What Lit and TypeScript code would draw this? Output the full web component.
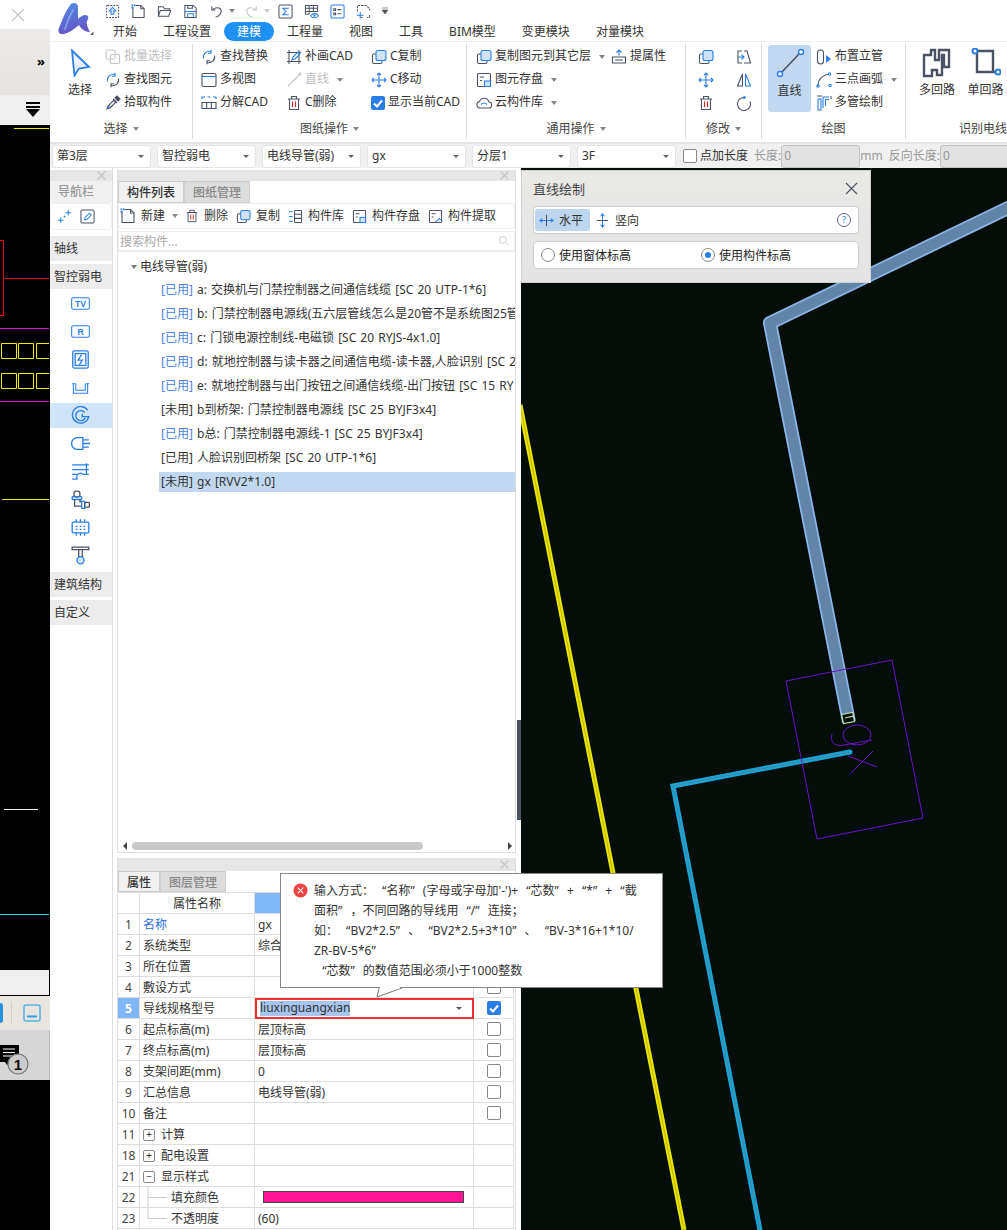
import { LitElement, html, css, svg } from "lit";
import { customElement } from "lit/decorators.js";

const ic = (size: number, content: unknown, vb = "0 0 16 16", h?: number) =>
  html`<svg class="ic" width=${size} height=${h ?? size} viewBox=${vb}>${content}</svg>`;

const closeX = html`<svg class="ic" width="9" height="9" viewBox="0 0 9 9"><path class="sg" stroke-width="1.200" d="M.5.5l8 8M8.500.5l-8 8"/></svg>`;

const P = {
  upload: svg`<rect x="1.500" y="1.500" width="13" height="13" rx="1" stroke-dasharray="2 1.200"/><path class="sb fb" d="M8 3.500l3.500 4H9.500V11h-3V7.500H4.500z"/>`,
  newdoc: svg`<path d="M2 3v11.500h12V5l-3.500-3.500H5"/><path d="M10.500 1.500V5H14"/><g class="fbb"><rect x="0.500" y="0.500" width="1.800" height="1.800"/><rect x="3" y="0.500" width="1.800" height="1.800"/><rect x="0.500" y="3" width="1.800" height="1.800"/></g>`,
  folder: svg`<path d="M1.500 13V3h5l1.500 2h5.500v2"/><path d="M1.500 13l2-6h11l-2 6z"/>`,
  save: svg`<path d="M2 1.500h9l3 3v10H2z"/><path class="sb" d="M2 8h12"/><path class="sb" d="M5 14.500V10.500h6v4"/><path d="M5 1.500v3h5v-3"/>`,
  undo: svg`<path d="M3 2.500v4h4"/><path d="M3.500 6.500C5 3.500 12 2.500 13 7c.6 3-2.500 6-6 7"/>`,
  redo: svg`<path class="sg" d="M13 2.500v4H9"/><path class="sg" d="M12.500 6.500C11 3.500 4 2.500 3 7c-.6 3 2.500 6 6 7"/>`,
  sigma: svg`<rect x="1" y="1" width="14" height="14" rx="1.500"/><path class="sb" d="M11.500 4.500H5l3.500 3.500L5 11.500h6.500"/>`,
  gridEye: svg`<path d="M1.500 11V1.500h13V8M1.500 4.500h13M1.500 8h13M5.500 1.500V11M10 1.500V8M1.500 11h4"/><path class="sb" d="M7 12.500c2-3 6-3 8.500 0-2.500 3-6.500 3-8.500 0z"/><circle class="fbb" cx="11" cy="12.500" r="1.200"/>`,
  listBox: svg`<rect x="1" y="1" width="14" height="14" rx="1.500" class="sb"/><path d="M4 5h2v2H4zM4 9.500h2v2H4zM8 6h4M8 10.500h4"/>`,
  dashAdd: svg`<path d="M1.500 8V1.500h9L14.500 5v2M14.500 12v2.500H12M7 14.500H5" stroke-dasharray="2.500 1"/><path class="sb" d="M1 12h7M4.500 8.500v7"/>`,
  batch: svg`<g class="sg"><rect x="1" y="1" width="9" height="9" rx="1.500"/><rect x="5.500" y="5.500" width="9" height="9" rx="1.500"/></g>`,
  find: svg`<path class="sb" d="M2.500 9.500A6 6 0 0 1 10 2.500M10 .8v3.400H6.800"/><path d="M13.500 6.500A6 6 0 0 1 6 13.500M6 15.200v-3.400h3.200"/>`,
  pick: svg`<path d="M2 14l1-3 6-6 2 2-6 6z"/><path d="M8 4l4 4" /><path class="fd" d="M10 3l2-2 3 3-2 2z"/><path class="sb" d="M2.500 13.500l2.500-2.500"/>`,
  multi: svg`<rect x="1" y="1.500" width="14" height="13" rx="1.500"/><path class="sb" d="M1 4.500h14"/>`,
  split: svg`<path class="sb" d="M1 4V2h3M12 2h3v2M6.500 2h3"/><path d="M1 7.500h14v6H1zM5.700 7.500v6M10.300 7.500v6"/>`,
  patch: svg`<path d="M3 1v14M1 3.500h14M1 12.500h14M13 1v14"/><path class="sb" d="M6 11l1-3 5-5 2 2-5 5z"/>`,
  lineG: svg`<path class="sg" d="M2 14L14 2"/><circle class="sg" cx="14" cy="2" r="1"/>`,
  trash: svg`<path d="M2 4h12M5.500 4V1.500h5V4M3.500 4v10.500h9V4"/><path class="sr" d="M6.500 6.500v5.500M9.500 6.500v5.500"/>`,
  copy: svg`<rect x="1.500" y="5" width="9.500" height="9.500" rx="1.500"/><rect class="sb fb" x="5" y="1.500" width="10" height="10" rx="2"/>`,
  move: svg`<path class="sb" d="M8 1v14M1 8h14M6 3l2-2 2 2M6 13l2 2 2-2M3 6L1 8l2 2M13 6l2 2-2 2"/>`,
  check: svg`<rect x="0" y="0" width="14" height="14" rx="2" class="cbf"/><path class="ckm" d="M3 7.500l3 3 5-6"/>`,
  disk: svg`<rect x="1.500" y="1.500" width="13" height="13" rx="1"/><path d="M4 5h4M4 8.500h2"/><rect class="sb fb" x="8.500" y="9" width="6" height="5.500"/>`,
  cloud: svg`<path d="M4 13h8.500a3 3 0 0 0 .5-6A5 5 0 0 0 3.500 6.500 3.300 3.300 0 0 0 4 13z"/><path class="sb" d="M5 9.500c2-2 4-2 6 0"/>`,
  attr: svg`<path d="M1.500 8h13v6h-13zM4 11h8"/><path class="sb" d="M8 6.500V1M5.500 3.500L8 1l2.500 2.500"/>`,
  modA: svg`<path d="M6 2H2v12h4"/><path d="M8 2h3l3.500 12H8"/><path class="sb" d="M2 8h6M5.500 5.500L8 8l-2.500 2.500"/>`,
  mirror: svg`<path d="M6.500 2L1.500 14h5z"/><path class="sb" d="M9.500 2l5 12h-5z"/>`,
  rotate: svg`<path d="M8 2.500A6.500 6.500 0 1 0 14 6.500"/><path class="fbb sb" d="M7.500 0.500l3 2-3 2z"/>`,
  riser: svg`<rect x="1.500" y="1" width="6" height="14" rx="3"/><path class="fbb" d="M10 6l5 4-5 4z"/>`,
  arc: svg`<path d="M2 14C2 7 7 3 13 2"/><circle class="sb" cx="2" cy="14" r="1.200"/><circle class="sb" cx="13.500" cy="2" r="1.200"/><circle class="sb" cx="14" cy="13.500" r="1.200"/>`,
  multiPipe: svg`<path d="M1 1h5M15 1v3"/><path class="sb" d="M2 15V4h3v11zM7 13V2h6"/><path class="sb" d="M9.500 11V4.500H13"/>`,
  pm: svg`<path class="sb" d="M9 4h6M12 1v6M1 12h6M4 9v6"/><circle class="fbb" cx="8" cy="8" r="1"/>`,
  edit: svg`<rect x="1" y="1" width="14" height="14" rx="1.500"/><path class="sb" d="M5 11.500l.5-2.500 4.500-4.500 2 2L7.500 11z"/>`,
  lib: svg`<rect x="7" y="1.500" width="7.500" height="13" rx="1"/><path d="M7 5.500h7.500M7 10h7.500"/><path class="sb" d="M1 3h4M1 8h4M1 13h4"/>`,
  extract: svg`<rect x="1.500" y="1.500" width="13" height="13" rx="1"/><path d="M4 5h4M4 8.500h2"/><path class="sb" d="M8 14l4-4 2 2"/>`,
  tv: svg`<rect class="sb" x="0.700" y="2" width="18.600" height="12" rx="1.500"/>`,
  tray: svg`<path class="sb" d="M2.500 4v10h15V4M5 4v7h10V4M1 4h4M15 4h4"/>`,
  card: svg`<rect class="sb" x="1.500" y="0.800" width="13" height="14.400" rx="1.200"/><rect class="sb" x="3.500" y="3" width="9" height="10"/><path class="sb" d="M9 3.800L6 8.500h3.500L7 12.500"/>`,
  swirl: svg`<path class="sb" d="M14 3.500A7 7 0 1 0 15 9H9.500V6.500"/><path class="sb" d="M11.500 5.500A4.200 4.200 0 1 0 12 10"/>`,
  plug: svg`<path class="sb" d="M10 3H5.500a5 5 0 0 0 0 10H10zM10 5h5M10 8h6M10 11h5"/>`,
  ladder: svg`<path class="sb" d="M1 2.500h14M1 6.500h14M13 1v9M1 10.500h5c1-1.500 3-1.500 4 0h5M1 14.500h4v-4"/>`,
  elbow: svg`<rect x="2.500" y="1" width="5" height="5" rx="2"/><rect class="sb" x="1" y="5.500" width="8" height="2.500" rx=".5"/><path d="M3 8v5.500h6"/><path d="M7.500 8v2h2"/><rect class="sb" x="9" y="9.500" width="2.500" height="6"/><rect x="11.500" y="10.500" width="4" height="4" rx="1"/>`,
  chip: svg`<rect class="sb" x="1" y="3.500" width="14" height="9" rx="1"/><path class="sb" d="M4.500 1v2.500M8 1v2.500M11.500 1v2.500M4.500 12.500V15M8 12.500V15M11.500 12.500V15M4 7h1.500M7.300 7h1.500M10.500 7H12M4 9.500h1.500M7.300 9.500h1.500M10.500 9.500H12"/>`,
  tee: svg`<path d="M1 1h14v2H1zM6.500 3h3v6h-3z"/><circle class="sb fb" cx="8" cy="12" r="3"/>`,
  hArrows: svg`<path class="sb" d="M1 8h14M3.500 6L1 8l2.500 2M12.500 6L15 8l-2.500 2"/><path d="M8 2v12"/>`,
  vArrows: svg`<path class="sb" d="M8 1v14M6 3.500L8 1l2 2.500M6 12.500L8 15l2-2.500"/><path d="M2 8h12"/>`,
  mag: svg`<g class="sg"><circle cx="6.500" cy="6.500" r="4.500"/><path d="M10 10l4 4"/></g>`,
  err: svg`<circle class="errc" cx="8" cy="8" r="7.500"/><path class="errx" d="M5 5l6 6M11 5l-6 6"/>`,
};

const caret = html`<span class="caret"></span>`;
const small = (icon: unknown, label: string, drop = false, dim = false) =>
  html`<div class="small ${dim ? "dim" : ""}">${ic(16, icon)}<span>${label}</span>${drop ? caret : ""}</div>`;

const group = (cls: string, label: string, body: unknown, drop = true) => html`
  <section class="group ${cls}">
    <div class="gbody">${body}</div>
    <div class="glabel"><span>${label}</span>${drop ? caret : ""}</div>
  </section>`;

const tree = [
  ["已用", "a: 交换机与门禁控制器之间通信线缆 [SC 20 UTP-1*6]", 1],
  ["已用", "b: 门禁控制器电源线(五六层管线怎么是20管不是系统图25管", 1],
  ["已用", "c: 门锁电源控制线-电磁锁 [SC 20 RYJS-4x1.0]", 1],
  ["已用", "d: 就地控制器与读卡器之间通信电缆-读卡器,人脸识别 [SC 2", 1],
  ["已用", "e: 就地控制器与出门按钮之间通信线缆-出门按钮 [SC 15 RY", 1],
  ["未用", "b到桥架: 门禁控制器电源线 [SC 25 BYJF3x4]", 0],
  ["已用", "b总: 门禁控制器电源线-1 [SC 25 BYJF3x4]", 1],
  ["已用", "人脸识别回桥架 [SC 20 UTP-1*6]", 0],
  ["未用", "gx [RVV2*1.0]", 0],
] as const;

type Row = { n: string; name: string; val?: string; cb?: boolean; on?: boolean; blue?: boolean; exp?: string; sub?: number };
const rows: Row[] = [
  { n: "1", name: "名称", val: "gx", blue: true },
  { n: "2", name: "系统类型", val: "综合" },
  { n: "3", name: "所在位置" },
  { n: "4", name: "敷设方式", cb: true },
  { n: "5", name: "导线规格型号" },
  { n: "6", name: "起点标高(m)", val: "层顶标高", cb: true },
  { n: "7", name: "终点标高(m)", val: "层顶标高", cb: true },
  { n: "8", name: "支架间距(mm)", val: "0", cb: true },
  { n: "9", name: "汇总信息", val: "电线导管(弱)", cb: true },
  { n: "10", name: "备注", cb: true },
  { n: "11", name: "计算", exp: "+" },
  { n: "18", name: "配电设置", exp: "+" },
  { n: "21", name: "显示样式", exp: "−" },
  { n: "22", name: "填充颜色", sub: 1 },
  { n: "23", name: "不透明度", val: "(60)", sub: 2 },
];

@customElement("app-root")
export class AppRoot extends LitElement {
  static styles = css`
    :host { width: 1007px; height: 1230px; position: relative; overflow: hidden; background: #fff; color: #333;
      font: 12px/1.2 "Noto Sans", "Noto Sans CJK SC", sans-serif; display: flex; }
    * { box-sizing: border-box; }
    .ic { flex: none; fill: none; stroke: #4b5263; stroke-width: 1.1; display: block; }
    .sb { stroke: #2a7fe6; } .sg { stroke: #c4c4c4; } .sr { stroke: #e02020; }
    .fb { fill: #cfe2f8; } .fbb { fill: #2a7fe6; stroke: none; } .fd { fill: #4b5263; }
    .cbf { fill: #2a7fe6; stroke: none; } .ckm { stroke: #fff; stroke-width: 2; }
    .errc { fill: #ef4444; stroke: none; } .errx { stroke: #fff; }

    /* left strip */
    .strip { width: 50px; flex: none; display: flex; flex-direction: column; background: #000; }
    .s-x { height: 29px; background: #fff; display: flex; align-items: center; padding-left: 11px; }
    .s-beige { height: 66px; background: linear-gradient(#ecebe8, #e6e3df); display: flex; align-items: center; justify-content: flex-end; padding: 0 5px 0 0; color: #000; font-size: 13px; font-weight: 700; }
    .s-grey { height: 30px; background: #efefef; display: flex; align-items: center; padding-left: 26px; }
    .s-draw { height: 845px; display: block; flex: none; }
    .s-field { height: 26px; background: #efefef; border-right: 1px solid #000; border-bottom: 1px solid #000; }
    .s-tools { height: 34px; background: #e9e6e1; display: flex; align-items: center; padding-right: 9px; }
    .s-tools b { display: block; width: 3px; height: 20px; background: #2a90e0; border-radius: 0 3px 3px 0; margin-right: 8px; }
    .s-tools i { display: block; width: 1px; height: 22px; background: #d0cfcc; margin-right: 11px; }
    .s-badge { height: 50px; background: #d6d6d6; padding-top: 15px; border-right: 1px solid #bbb; }
    .s-badge svg { display: block; }

    .right { flex: 1; min-width: 0; display: flex; flex-direction: column; }
    .head { display: flex; height: 41px; background: #fff; flex: none; }
    .logo { width: 50px; padding: 2px 0 0 7px; flex: none; }
    .logo svg { display: block; }
    .headc { flex: 1; display: flex; flex-direction: column; }
    .quick { height: 22px; display: flex; align-items: center; padding-left: 5px; }
    .quick .ic { margin-right: 11px; }
    .quick .caret { margin: 0 8.500px 0 -6px; }
    .quick .gc { border-top-color: #ccc; }
    .tabs { display: flex; height: 19px; align-items: center; font-size: 12px; white-space: nowrap; }
    .tabs span { padding: 1px 13px 0; height: 19px; line-height: 18px; }
    .tabs .on { background: #1e90f0; color: #fff; border-radius: 10px; }
    .caret { display: inline-block; width: 0; height: 0; border: 3.500px solid transparent; border-top: 4px solid #888; border-bottom: 0; margin-left: 5px; flex: none; }

    .ribbon { height: 101px; flex: none; display: flex; background: #fff; border-top: 1px solid #eee; padding-top: 2px; }
    .group { height: 95px; flex: none; display: flex; flex-direction: column; border-right: 1px solid #dcdcdc; }
    .gbody { height: 75px; display: flex; padding-top: 1px; }
    .glabel { height: 20px; display: flex; align-items: center; justify-content: center; color: #444; white-space: nowrap; }
    .g1 { width: 143px; } .g2 { width: 274px; } .g3 { width: 219px; } .g4 { width: 76px; } .g5 { width: 144px; } .g6 { width: 120px; border: 0; }
    .col { display: flex; flex-direction: column; }
    .small { height: 23px; display: flex; align-items: center; gap: 3px; white-space: nowrap; }
    .dim { color: #bdbdbd; }
    .big { display: flex; flex-direction: column; align-items: center; white-space: nowrap; }
    .g1 .big { width: 55px; padding: 4px 0 0 5px; gap: 6px; }
    .g2 .col:nth-child(1) { margin-left: 8px; width: 85px; }
    .g2 .col:nth-child(2) { width: 85px; }
    .g3 .col:nth-child(1) { margin-left: 9px; width: 135px; }
    .g4 .col { margin-left: 12px; width: 33px; }
    .g5 .big { width: 43px; height: 67px; margin: 0 5px 0 6px; background: #c2d8f0; border-radius: 3px; padding-top: 3px; gap: 6px; }
    .g6 .big { padding-top: 3px; gap: 5px; }
    .g6 .big:first-child { margin-left: 12px; width: 38px; }
    .g6 .big:nth-child(2) { margin-left: 11px; width: 37px; }
    .g6 .glabel { justify-content: flex-start; padding-left: 53px; }
    .cb { width: 14px; height: 14px; border: 1px solid #888; border-radius: 2px; background: #fff; flex: none; display: block; }

    .bar { height: 26px; flex: none; background: #f0f0f0; border-top: 2px solid #e2e2e2; display: flex; align-items: center; padding-left: 2px; gap: 6px; white-space: nowrap; overflow: hidden; }
    .combo { width: 99px; height: 23px; flex: none; background: #fff; border: 1px solid #e4e4e4; border-radius: 3px; display: flex; align-items: center; justify-content: space-between; padding: 0 6px 0 4px; }
    .combo .caret { border-top-color: #666; border-width: 3px; border-top-width: 3.500px; }
    .bar .label { display: flex; align-items: center; gap: 3px; margin-left: 1px; }
    .bar .mute { color: #999; }
    .bar .inp { width: 79px; height: 23px; flex: none; background: #e2e2e2; border: 1px solid #c2c2c2; border-radius: 3px; color: #999; padding: 3px 2px; }
    .tight { margin-left: -6px; }

    .main { flex: 1; min-height: 0; display: flex; }
    .nav { width: 63px; flex: none; border-right: 1px solid #ddd; padding-top: 2px; display: flex; flex-direction: column; }
    .phead { height: 11px; background: #e6e6e6; display: flex; align-items: center; justify-content: flex-end; padding-right: 6px; flex: none; }
    .phead.tall { height: 13px; }
    .navtitle { height: 22px; background: #f0f0f0; color: #999; padding: 4px 0 0 8px; font-weight: 500; flex: none; }
    .navtools { height: 27px; background: #fff; border: 1px solid #eee; border-radius: 4px; display: flex; align-items: center; gap: 8px; padding-left: 6px; flex: none; }
    .navgroup { height: 25px; margin-top: 3px; background: #ececec; padding: 6px 0 0 4px; flex: none; }
    .navgroup.first { margin-top: 6px; }
    .navgroup.after { margin-top: 1px; }
    .navgroup.last { margin-top: 3px; }
    .navicons { display: flex; flex-direction: column; padding-top: 2px; }
    .navicon { height: 25px; margin-bottom: 3px; display: flex; align-items: center; justify-content: center; padding-right: 2px; }
    .navicon.sel { background: #d0e4f8; }
    .tvt { font-size: 9px; font-weight: 700; fill: #2a7fe6; stroke: none; font-family: "Liberation Sans", sans-serif; }

    .gut { width: 4px; flex: none; }
    .panels { width: 399px; flex: none; display: flex; flex-direction: column; padding-top: 2px; overflow: hidden; }
    .pane { border: 1px solid #ddd; border-top: 0; display: flex; flex-direction: column; }
    .pane.a { height: 683px; flex: none; }
    .pane.b { flex: 1; margin-top: 5px; min-height: 0; border-bottom: 0; }
    .tabstrip { display: flex; height: 22px; flex: none; background: #fff; }
    .tabstrip.low { height: 21px; }
    .tabstrip span { padding: 4px 8px 0; background: #dcdcdc; color: #888; border: 1px solid #ccc; font-weight: 500; white-space: nowrap; }
    .tabstrip .on { background: #f0f0f0; color: #333; }
    .ptools { height: 26px; display: flex; align-items: center; padding-left: 1px; gap: 5px; white-space: nowrap; border: 1px solid #eee; border-radius: 3px; flex: none; }
    .ptools span { margin-right: 3px; }
    .ptools .caret { margin: 0 2px 0 -1px; }
    .search { height: 20px; margin-top: 2px; border: 1px solid #eee; color: #aaa; display: flex; align-items: center; justify-content: space-between; padding: 2px 4px 0 1px; flex: none; }
    .search .ic { margin-top: -2px; }
    .treeb { flex: 1; position: relative; padding-top: 6px; overflow: hidden; border-top: 1px solid #eee; }
    .troot { height: 18px; display: flex; align-items: center; padding-left: 13px; gap: 3px; margin-bottom: 5px; }
    .troot .caret { margin: 0; border-top-color: #777; }
    .titem { height: 24px; padding: 2px 0 0 43px; white-space: nowrap; word-spacing: 1px; }
    .titem.sel { margin: -1px 0 0 41px; padding: 3px 0 0 2px; height: 20px; background: #c2d8f0; }
    .titem em { font-style: normal; color: #4b7fe0; }
    .scroll { height: 12px; position: absolute; left: 0; right: 0; bottom: 0; background: #fff; display: flex; align-items: center; padding: 0 3px 0 5px; }
    .scroll i { display: block; width: 0; height: 0; border: 4px solid transparent; flex: none; }
    .scroll .l { border-right-color: #444; border-left: 0; }
    .scroll .r { border-left-color: #444; border-right: 0; margin-left: auto; }
    .thumb { flex: none; width: 291px; height: 8px; background: #c8c8c8; border-radius: 4px; margin-left: 5px; }

    .table { display: grid; grid-template-columns: 22px 115px 219px 40px; grid-auto-rows: 21px; border-top: 1px solid #ddd; }
    .table > div { border-right: 1px solid #ddd; border-bottom: 1px solid #ddd; display: flex; align-items: center; white-space: nowrap; overflow: hidden; padding-top: 2px; }
    .c-n { justify-content: center; color: #444; }
    .c-n.on { background: #7eb6f8; color: #fff; font-weight: 700; }
    .table .c-name { padding-left: 3px; }
    .c-name.blue { color: #2a6fe0; }
    .table .c-h { justify-content: center; }
    .table .c-hv { background: #7eb6f8; }
    .table .c-val { padding-left: 3px; }
    .table .c-edit { border: 2px solid #f03030; padding: 0 10px 0 3px; justify-content: space-between; }
    .sel-t { background: #a5c4ee; }
    .c-edit .caret { border-top-color: #555; border-width: 3px; border-top-width: 3.500px; }
    .table .c-ck { justify-content: center; padding-top: 0; }
    .exp { width: 12px; height: 12px; border: 1px solid #888; border-radius: 2px; font-size: 10px; line-height: 9px; text-align: center; margin-right: 6px; flex: none; }
    .swatch { width: 201px; height: 12px; background: #ff1493; border: 1px solid #444; margin: -2px 0 0 5px; }
    .branch { margin: -2px 3px 0 0; }

    .split { width: 5px; flex: none; padding-top: 552px; }
    .split i { display: block; height: 100px; margin-left: 1px; background: #4b5560; }
    .canvas { flex: 1; min-width: 0; background: #040d08; display: block; }

    .dialog { position: absolute; left: 521px; top: 170px; width: 350px; height: 113px; background: linear-gradient(#e9e9e6, #e4e4e4); border: 1px solid #cfcfcf; padding: 0 11px; display: flex; flex-direction: column; }
    .dtitle { height: 35px; flex: none; display: flex; align-items: center; justify-content: space-between; font-size: 13px; color: #444; padding: 2px 1px 0 0; }
    .dtitle .ic { margin-top: -2px; }
    .drow { height: 28px; flex: none; background: #fff; border: 1px solid #ccc; border-radius: 4px; display: flex; align-items: center; }
    .drow + .drow { margin-top: 7px; }
    .drow span { padding-top: 2px; }
    .dbtn { height: 22px; display: flex; align-items: center; gap: 5px; padding: 0 7px 0 4px; margin-left: 1px; border-radius: 3px; }
    .dbtn.on { background: #bcd6ef; }
    .help { margin-left: auto; margin-right: 7px; width: 14px; height: 14px; border: 1px solid #667; border-radius: 50%; font-size: 9px; line-height: 12px; text-align: center; color: #2a7fe6; }
    .radio { width: 14px; height: 14px; border: 1px solid #888; border-radius: 50%; background: #fff; display: flex; align-items: center; justify-content: center; flex: none; }
    .radio.on::after { content: ""; width: 6px; height: 6px; border-radius: 50%; background: #2a7fe6; }
    .ropt { display: flex; align-items: center; gap: 4px; color: #222; }
    .ropt:first-child { margin-left: 7px; width: 160px; }

    .tip { position: absolute; left: 280px; top: 873px; width: 383px; height: 115px; background: #fff; border: 1px solid #888; padding: 7px 0 0 33px; line-height: 20px; white-space: nowrap; color: #333; word-spacing: 5px; }
    .tip .q { margin-right: 8px; }
    .tip .ei { position: absolute; left: 12px; top: 9px; }
    .tip .arrow { position: absolute; left: 95px; top: 113px; fill: #fff; stroke: #777; }
  `;

  render() {
    return html`
      ${this.renderStrip()}
      <div class="right">
        ${this.renderHead()}
        ${this.renderRibbon()}
        ${this.renderBar()}
        <div class="main">
          ${this.renderNav()}
          <div class="gut"></div>
          ${this.renderPanels()}
          <div class="split"><i></i></div>
          ${this.renderCanvas()}
        </div>
      </div>
      ${this.renderDialog()}
      ${this.renderTip()}
    `;
  }

  renderStrip() {
    return html`<aside class="strip">
      <div class="s-x">${ic(14, svg`<path class="sg" d="M1 1l12 12M13 1L1 13"/>`, "0 0 14 14")}</div>
      <div class="s-beige">»</div>
      <div class="s-grey">
        <svg width="14" height="16" viewBox="0 0 14 16"><path d="M0 0h14v2H0zM0 4h14v2H0zM0 7h14l-7 8z" fill="#000"/></svg>
      </div>
      <svg class="s-draw" width="50" height="845" viewBox="0 125 50 845" fill="none">
        <path d="M14 128.500h35" stroke="#e8e800"/>
        <path d="M0 240.500h3.500v75H0M3.500 278.500H49" stroke="#e01010"/>
        <path d="M0 328.500h49M0 401.500h49" stroke="#e010e0"/>
        <path d="M1.500 343.500h15v15h-15zM18.500 343.500h15v15h-15zM49 343.500H36.500v15H49M1.500 373.500h15v15h-15zM18.500 373.500h15v15h-15zM49 373.500H36.500v15H49" stroke="#f0f000"/>
        <path d="M2 499.500h47" stroke="#f0f000"/>
        <path d="M4 809.500h34" stroke="#eee"/>
        <path d="M0 914.500h49" stroke="#10e0e0"/>
      </svg>
      <div class="s-field"></div>
      <div class="s-tools">
        <b></b><i></i>
        <svg width="18" height="18" viewBox="0 0 18 18" fill="none"><rect x="1" y="1" width="16" height="16" rx="2" stroke="#5ab0e0" stroke-width="1.500"/><path d="M4 12.500h10" stroke="#38a0e0" stroke-width="2"/></svg>
      </div>
      <div class="s-badge">
        <svg width="30" height="30" viewBox="0 0 30 30" fill="none"><path d="M0 0h19v17h-9l-3 3-2-3H0z" fill="#000"/><path d="M3 4h12M3 7.500h12M3 11h12" stroke="#fff"/><circle cx="18" cy="19" r="10" fill="#ccc" stroke="#777" stroke-width="1.200"/><text x="18" y="24.500" font-size="15" font-weight="700" text-anchor="middle" fill="#111" font-family="Liberation Sans">1</text></svg>
      </div>
    </aside>`;
  }

  renderHead() {
    return html`<header class="head">
      <div class="logo">
        <svg width="37" height="33" viewBox="0 0 37 33" fill="none" stroke-linecap="round">
          <defs><linearGradient id="lg" gradientUnits="userSpaceOnUse" x1="14" y1="0" x2="22" y2="33"><stop offset="0" stop-color="#4f8ae6"/><stop offset="1" stop-color="#6a50c4"/></linearGradient></defs>
          <path d="M14 2C17 0 21 1 21 5L21 17C23 15 26 13 28 13C32 13 32 16 30 19C29 22 31 26 33 30C28 30 24 27 22 23C17 27 12 31 7 32C3 33 0 30 2 26C5 18 9 8 14 2Z" fill="url(#lg)"/>
          <path d="M8 27C10 20 13 13 16 8" stroke="#8fb4f2" stroke-width="2" opacity=".7"/>
          <path d="M33 33l3.500-3.500V33z" fill="#666"/>
        </svg>
      </div>
      <div class="headc">
        <div class="quick">
          ${ic(15, P.upload)}${ic(15, P.newdoc)}${ic(15, P.folder)}${ic(15, P.save)}
          ${ic(15, P.undo)}${caret}${ic(15, P.redo)}<span class="caret gc"></span>
          ${ic(15, P.sigma)}${ic(15, P.gridEye)}${ic(15, P.listBox)}${ic(15, P.dashAdd)}
          <svg width="6" height="8" viewBox="0 0 6 8"><path d="M0 1h6M0 3h6l-3 4z" fill="#555" stroke="#555" stroke-width=".6"/></svg>
        </div>
        <nav class="tabs">
          ${["开始", "工程设置", "建模", "工程量", "视图", "工具", "BIM模型", "变更模块", "对量模块"].map(
            (t) => html`<span class=${t === "建模" ? "on" : ""}>${t}</span>`,
          )}
        </nav>
      </div>
    </header>`;
  }

  renderRibbon() {
    return html`<div class="ribbon">
      ${group("g1", "选择", html`
        <div class="big">
          ${ic(24, svg`<path class="sb" fill="#eaf3fd" stroke-width="1.800" d="M4 1.500L21 18l-10 1.500-4.500 7z"/>`, "0 0 24 28", 28)}
          <span>选择</span>
        </div>
        <div class="col">
          ${small(P.batch, "批量选择", false, true)}${small(P.find, "查找图元")}${small(P.pick, "拾取构件")}
        </div>`)}
      ${group("g2", "图纸操作", html`
        <div class="col">${small(P.find, "查找替换")}${small(P.multi, "多视图")}${small(P.split, "分解CAD")}</div>
        <div class="col">${small(P.patch, "补画CAD")}${small(P.lineG, "直线", true, true)}${small(P.trash, "C删除")}</div>
        <div class="col">${small(P.copy, "C复制")}${small(P.move, "C移动")}
          <div class="small">${ic(14, P.check, "0 0 14 14")}<span>显示当前CAD</span></div></div>`)}
      ${group("g3", "通用操作", html`
        <div class="col">${small(P.copy, "复制图元到其它层", true)}${small(P.disk, "图元存盘", true)}${small(P.cloud, "云构件库", true)}</div>
        <div class="col">${small(P.attr, "提属性")}</div>`)}
      ${group("g4", "修改", html`
        <div class="col">${small(P.copy, "")}${small(P.move, "")}${small(P.trash, "")}</div>
        <div class="col">${small(P.modA, "")}${small(P.mirror, "")}${small(P.rotate, "")}</div>`)}
      ${group("g5", "绘图", html`
        <div class="big">
          ${ic(30, svg`<path stroke-width="1.600" d="M5 26L25 5"/><circle class="sb" fill="#fff" stroke-width="1.400" cx="5" cy="26" r="2.500"/><circle class="sb" fill="#fff" stroke-width="1.400" cx="26" cy="4" r="2.500"/>`, "0 0 30 30")}
          <span>直线</span>
        </div>
        <div class="col">${small(P.riser, "布置立管")}${small(P.arc, "三点画弧", true)}${small(P.multiPipe, "多管绘制")}</div>`, false)}
      ${group("g6", "识别电线", html`
        <div class="big">
          ${ic(30, svg`<path stroke-width="2.400" d="M9 2h4v10h4V2h10v17h-5v-12h-2v20h-5v-5H10v6H2V7h7z"/>`, "0 0 30 30")}
          <span>多回路</span>
        </div>
        <div class="big">
          ${ic(30, svg`<path stroke-width="2.400" d="M6 3h16v21M6 3v21h19"/><circle class="sb" fill="#fff" stroke-width="2" cx="4" cy="3" r="2.500"/><circle class="sb" fill="#fff" stroke-width="2" cx="27" cy="24" r="2.500"/>`, "0 0 30 30")}
          <span>单回路</span>
        </div>`, false)}
    </div>`;
  }

  renderBar() {
    return html`<div class="bar">
      ${["第3层", "智控弱电", "电线导管(弱)", "gx", "分层1", "3F"].map(
        (t) => html`<div class="combo"><span>${t}</span>${caret}</div>`,
      )}
      <div class="label"><i class="cb"></i><span>点加长度</span></div>
      <span class="mute">长度:</span>
      <div class="inp tight">0</div>
      <span class="mute tight">mm</span>
      <span class="mute">反向长度:</span>
      <div class="inp tight">0</div>
    </div>`;
  }

  renderNav() {
    const tv = (t: string) => svg`${P.tv}<text class="tvt" x="10" y="11.500" text-anchor="middle">${t}</text>`;
    const icons: [unknown, string, boolean?][] = [
      [tv("TV"), "0 0 20 16"],
      [tv("R"), "0 0 20 16"],
      [P.card, "0 0 16 16"],
      [P.tray, "0 0 20 16"],
      [P.swirl, "0 0 16 16", true],
      [P.plug, "0 0 16 16"],
      [P.ladder, "0 0 16 16"],
      [P.elbow, "0 0 16 16"],
      [P.chip, "0 0 16 16"],
      [P.tee, "0 0 16 16"],
    ];
    return html`<aside class="nav">
      <div class="phead">${closeX}</div>
      <div class="navtitle">导航栏</div>
      <div class="navtools">${ic(15, P.pm)}${ic(15, P.edit)}</div>
      <div class="navgroup first">轴线</div>
      <div class="navgroup">智控弱电</div>
      <div class="navicons">
        ${icons.map(
          ([c, vb, sel]) => html`<div class="navicon ${sel ? "sel" : ""}">${ic(19, c, vb)}</div>`,
        )}
      </div>
      <div class="navgroup after">建筑结构</div>
      <div class="navgroup last">自定义</div>
    </aside>`;
  }

  renderPanels() {
    return html`<div class="panels">
      <section class="pane a">
        <div class="phead">${closeX}</div>
        <div class="tabstrip"><span class="on">构件列表</span><span>图纸管理</span></div>
        <div class="ptools">
          ${ic(16, P.newdoc)}<span>新建</span>${caret}
          ${ic(14, P.trash)}<span>删除</span>
          ${ic(15, P.copy)}<span>复制</span>
          ${ic(15, P.lib)}<span>构件库</span>
          ${ic(15, P.disk)}<span>构件存盘</span>
          ${ic(15, P.extract)}<span>构件提取</span>
        </div>
        <div class="search"><span>搜索构件...</span>${ic(12, P.mag)}</div>
        <div class="treeb">
          <div class="troot">${caret}<span>电线导管(弱)</span></div>
          ${tree.map(
            ([s, t, blue], i) => html`<div class="titem ${i === 8 ? "sel" : ""}">${blue ? html`<em>[${s}]</em>` : html`[${s}]`} ${t}</div>`,
          )}
          <div class="scroll"><i class="l"></i><div class="thumb"></div><i class="r"></i></div>
        </div>
      </section>
      <section class="pane b">
        <div class="phead tall">${closeX}</div>
        <div class="tabstrip low"><span class="on">属性</span><span>图层管理</span></div>
        <div class="table">
          <div class="c-n"></div><div class="c-h">属性名称</div><div class="c-hv"></div><div></div>
          ${rows.map((r) => this.renderRow(r))}
        </div>
      </section>
    </div>`;
  }

  renderRow(r: Row) {
    const edit = r.n === "5";
    return html`
      <div class="c-n ${edit ? "on" : ""}">${r.n}</div>
      <div class="c-name ${r.blue ? "blue" : ""}">
        ${r.exp ? html`<span class="exp">${r.exp}</span>` : ""}
        ${r.sub
          ? html`<svg class="branch" width="25" height="21" viewBox="0 0 25 21" fill="none"><path d=${r.sub === 1 ? "M5 0v10.500h19M5 10.500V21" : "M5 0v10.500h19"} stroke="#ccc"/></svg>`
          : ""}
        ${r.name}
      </div>
      ${edit
        ? html`<div class="c-edit"><span class="sel-t">liuxinguangxian</span>${caret}</div>`
        : html`<div class="c-val">${r.n === "22" ? html`<div class="swatch"></div>` : r.val ?? ""}</div>`}
      <div class="c-ck">
        ${edit ? ic(14, P.check, "0 0 14 14") : r.cb ? html`<i class="cb"></i>` : ""}
      </div>`;
  }

  renderCanvas() {
    return html`<svg class="canvas" width="486" height="1062" viewBox="521 168 486 1062" fill="none">
      <path d="M520 405L684 1230" stroke="#e6e600" stroke-width="5"/>
      <path d="M520 405L684 1230" stroke="#c8b000" stroke-width="1"/>
      <path d="M1010 207L770 323L849 722" stroke="#8ab6ea" stroke-width="14" stroke-linejoin="round"/>
      <path d="M1010 207L770 323L849 722" stroke="#6284a8" stroke-width="10.500" stroke-linejoin="round"/>
      <path d="M843.500 723.500l-1.800-9 11-2 1.800 9zM845 718l8.500-1.800" stroke="#c0dcb0" stroke-width="1.200" fill="#040d08"/>
      <path d="M850 752L673 786L760 1230" stroke="#10a8dc" stroke-width="5" stroke-linecap="round"/>
      <path d="M850 752L673 786L760 1230" stroke="#5a7f90" stroke-width="1"/>
      <g stroke="#6a14c8" stroke-width="1">
        <path d="M786 681L892 660L923 818L817 839z"/>
        <ellipse cx="857" cy="735" rx="14" ry="10"/>
        <path d="M832 734c-2 8 2 13 12 11l28-5"/>
        <path d="M848 756l29 11M873 751l-22 22"/>
      </g>
    </svg>`;
  }

  renderDialog() {
    return html`<div class="dialog">
      <div class="dtitle"><span>直线绘制</span>${ic(13, svg`<path d="M1 1l11 11M12 1L1 12"/>`, "0 0 13 13")}</div>
      <div class="drow">
        <div class="dbtn on">${ic(15, P.hArrows)}<span>水平</span></div>
        <div class="dbtn">${ic(15, P.vArrows)}<span>竖向</span></div>
        <div class="help">?</div>
      </div>
      <div class="drow">
        <div class="ropt"><i class="radio"></i><span>使用窗体标高</span></div>
        <div class="ropt"><i class="radio on"></i><span>使用构件标高</span></div>
      </div>
    </div>`;
  }

  renderTip() {
    return html`<div class="tip">
      <span class="ei">${ic(15, P.err)}</span>
      <div>输入方式： “名称” (字母或字母加'-')+ “芯数” + “*” + “截</div>
      <div>面积” ，不同回路的导线用 “/” 连接；</div>
      <div>如： “BV2*2.5” 、 “BV2*2.5+3*10” 、 “BV-3*16+1*10/</div>
      <div>ZR-BV-5*6”</div>
      <div>&nbsp;<span class="q">“芯数”</span>的数值范围必须小于1000整数</div>
      <svg class="arrow" width="28" height="12" viewBox="0 0 28 12"><path d="M3 1L1 10L26 1"/><path d="M4 0h20v1.500H4z" fill="#fff" stroke="none"/></svg>
    </div>`;
  }
}
